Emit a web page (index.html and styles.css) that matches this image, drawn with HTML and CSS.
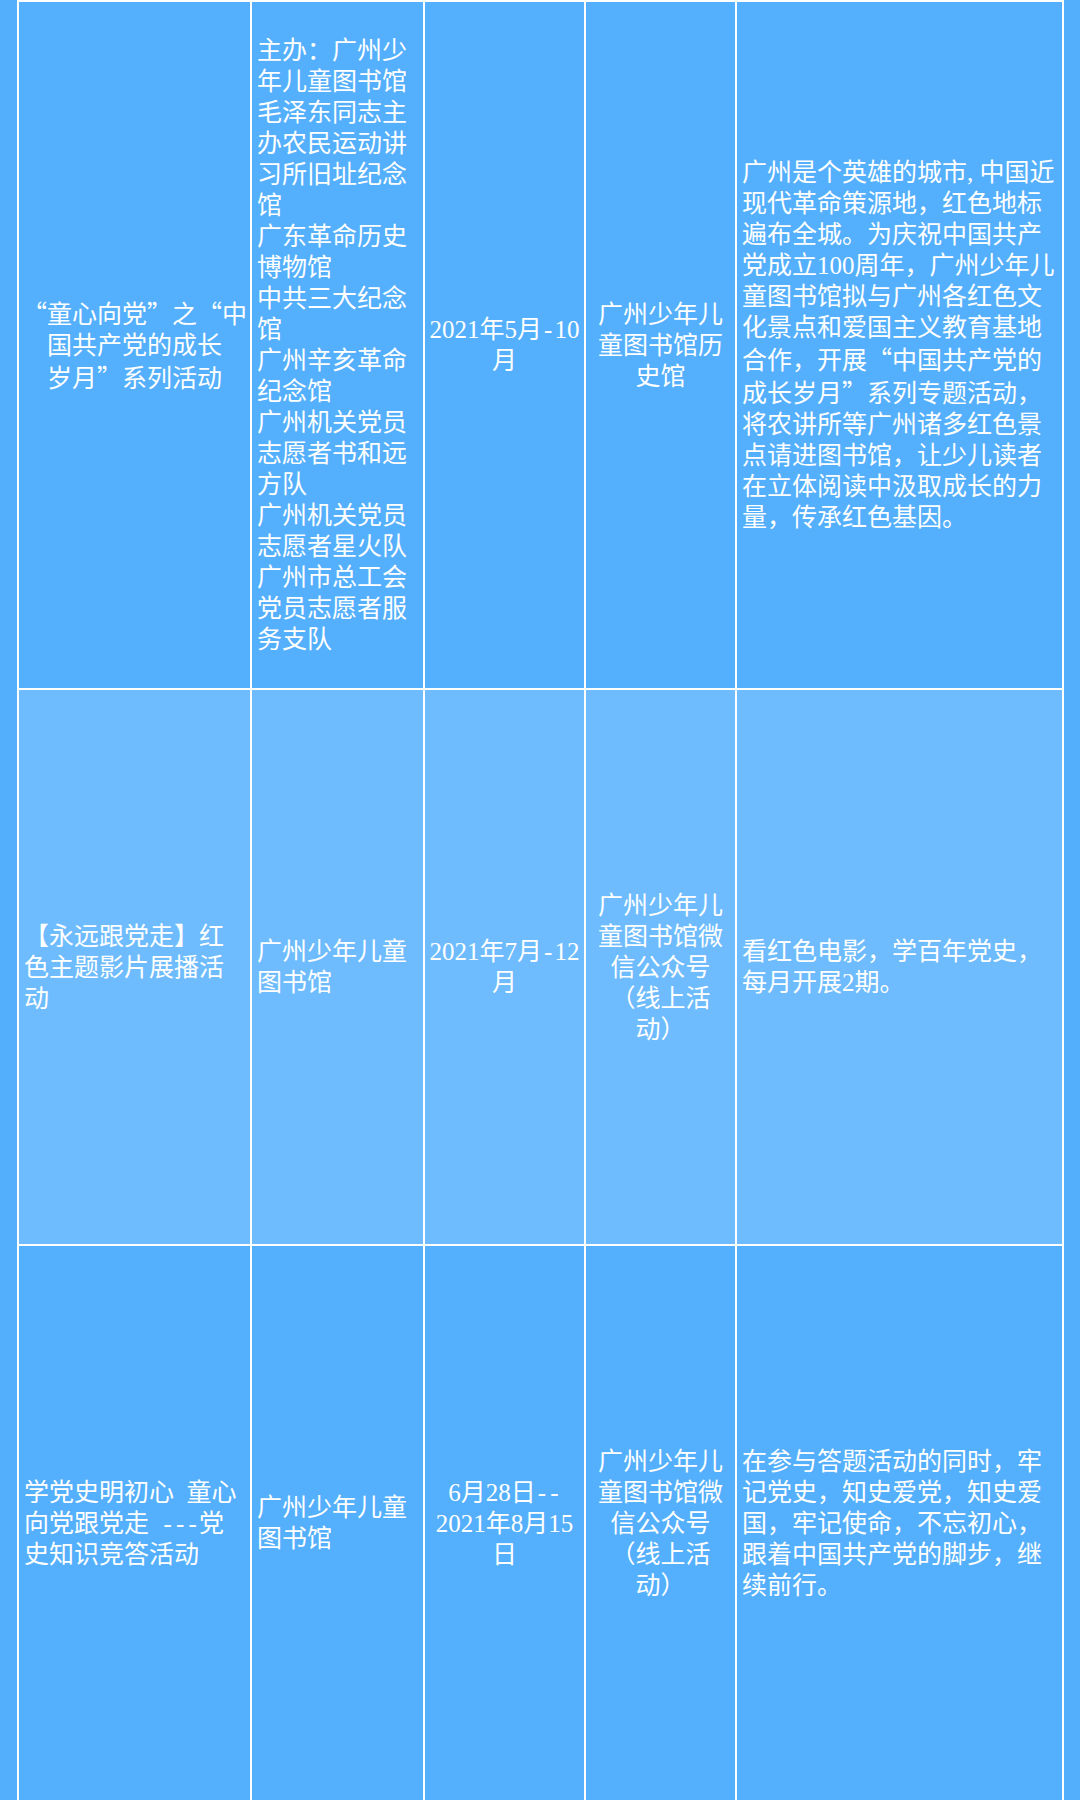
FILE: index.html
```html
<!DOCTYPE html>
<html lang="zh-CN">
<head>
<meta charset="utf-8">
<title>活动表</title>
<link rel="stylesheet" href="styles.css">
</head>
<body>
<div class="table">
  <div class="cell mid"><p><span class="q">“</span>童心向党<span class="q">”</span>之<span class="q">“</span>中<br>国共产党的成长<br>岁月<span class="q">”</span>系列活动</p></div>
  <div class="cell"><p>主办：广州少<br>年儿童图书馆<br>毛泽东同志主<br>办农民运动讲<br>习所旧址纪念<br>馆<br>广东革命历史<br>博物馆<br>中共三大纪念<br>馆<br>广州辛亥革命<br>纪念馆<br>广州机关党员<br>志愿者书和远<br>方队<br>广州机关党员<br>志愿者星火队<br>广州市总工会<br>党员志愿者服<br>务支队</p></div>
  <div class="cell mid"><p>2021年5月<span class="h">-</span>10<br>月</p></div>
  <div class="cell mid"><p>广州少年儿<br>童图书馆历<br>史馆</p></div>
  <div class="cell"><p>广州是个英雄的城市<span class="cm">,</span>中国近<br>现代革命策源地，红色地标<br>遍布全城。为庆祝中国共产<br>党成立100周年，广州少年儿<br>童图书馆拟与广州各红色文<br>化景点和爱国主义教育基地<br>合作，开展<span class="q">“</span>中国共产党的<br>成长岁月<span class="q">”</span>系列专题活动，<br>将农讲所等广州诸多红色景<br>点请进图书馆，让少儿读者<br>在立体阅读中汲取成长的力<br>量，传承红色基因。</p></div>

  <div class="cell lt"><p>【永远跟党走】红<br>色主题影片展播活<br>动</p></div>
  <div class="cell lt"><p>广州少年儿童<br>图书馆</p></div>
  <div class="cell lt mid"><p>2021年7月<span class="h">-</span>12<br>月</p></div>
  <div class="cell lt mid"><p>广州少年儿<br>童图书馆微<br>信公众号<br>（线上活<br>动）</p></div>
  <div class="cell lt"><p>看红色电影，学百年党史，<br>每月开展2期。</p></div>

  <div class="cell"><p>学党史明初心&ensp;童心<br>向党跟党走&ensp;<span class="h">---</span>党<br>史知识竞答活动</p></div>
  <div class="cell"><p>广州少年儿童<br>图书馆</p></div>
  <div class="cell mid"><p>6月28日<span class="h">--</span><br>2021年8月15<br>日</p></div>
  <div class="cell mid"><p>广州少年儿<br>童图书馆微<br>信公众号<br>（线上活<br>动）</p></div>
  <div class="cell"><p>在参与答题活动的同时，牢<br>记党史，知史爱党，知史爱<br>国，牢记使命，不忘初心，<br>跟着中国共产党的脚步，继<br>续前行。</p></div>
</div>
</body>
</html>
```

FILE: styles.css
```css
html, body {
  margin: 0;
  padding: 0;
  background: #53aefc;
}

body {
  width: 1080px;
  height: 1800px;
  overflow: hidden;
}

.table {
  box-sizing: border-box;
  margin-left: 17px;
  width: 1047px;
  display: grid;
  grid-template-columns: 231px 171px 159px 149px 325px;
  grid-template-rows: 686px 554px 554px;
  gap: 2px;
  padding: 2px;
  background: #ffffff;
}

.cell {
  background: #54affc;
  color: #ffffff;
  font-family: "Liberation Serif", "Noto Sans CJK SC", serif;
  font-size: 25px;
  line-height: 31px;
  display: flex;
  align-items: center;
  padding: 0 5px;
  white-space: nowrap;
  overflow: hidden;
}

.cell p {
  margin: 0;
}

.cell.mid {
  justify-content: center;
  text-align: center;
}

.cell.lt {
  background: #6ebcfd;
}

.q {
  font-family: "Noto Sans CJK SC", sans-serif;
  font-feature-settings: "fwid" 1;
}

.h {
  letter-spacing: 0.167em;
  margin-left: 0.083em;
  margin-right: -0.083em;
}

.cm {
  letter-spacing: 0.25em;
}
```
